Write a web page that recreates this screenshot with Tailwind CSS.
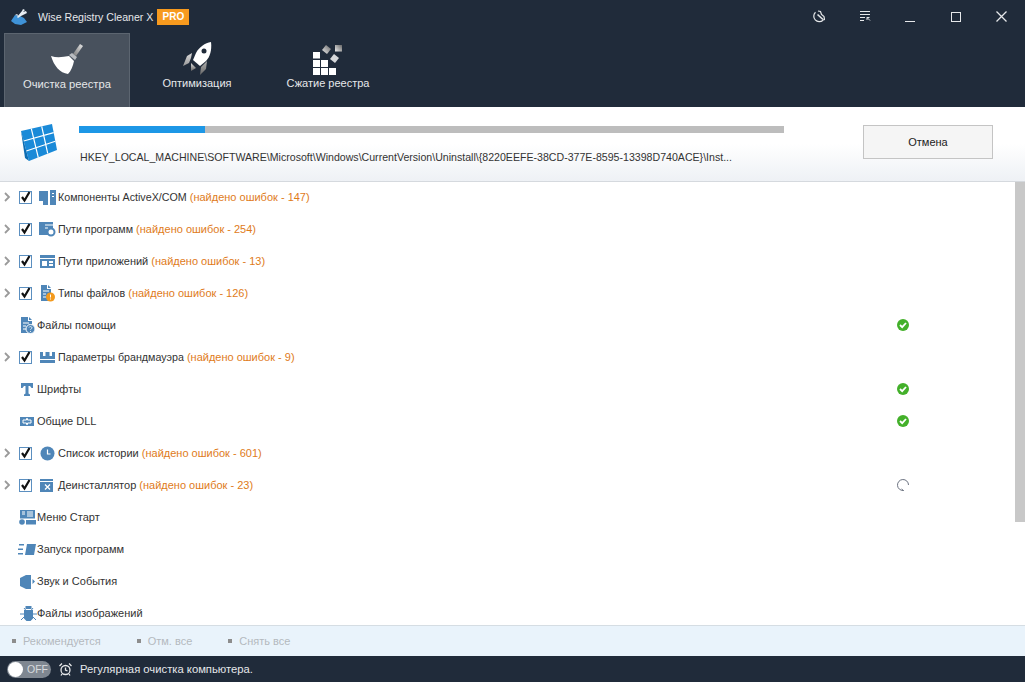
<!DOCTYPE html>
<html lang="ru">
<head>
<meta charset="UTF-8">
<title>Wise Registry Cleaner X</title>
<script src="https://cdn.jsdelivr.net/npm/@tailwindcss/browser@4"></script>
</head>
<body class="w-[1025px] h-[682px] overflow-hidden bg-white font-['Liberation_Sans',sans-serif] text-[11px] leading-[14px] text-[#333]">

<!-- top bar -->
<div class="h-[107px] bg-[#202b3a] text-[#e6e8ea]">
  <div class="h-[33px] flex items-center">
    <svg class="ml-[11px] w-[17px] h-[16px]" viewBox="0 0 17 16"><path d="M0 12l4-6 5 1 4 2 3 4-6 3-6-1z" fill="#3f93d8"/><path d="M4 6l2-1 2 2zM6 8l5-6 1-2 2 1-2 2 3-1 1 2-4 2-2 1-3 2z" fill="#e8eef4"/></svg>
    <span class="ml-[10px] text-[10.600px]">Wise Registry Cleaner X</span>
    <span class="ml-[4px] w-[32px] h-[16px] bg-[#f79a1e] text-white text-[10px] font-bold flex items-center justify-center">PRO</span>
    <div class="ml-auto flex items-center">
      <svg class="w-[13px] h-[13px] mr-[35px]" viewBox="0 0 13 13" fill="none" stroke="#e6e8ea" stroke-width="1.200"><path d="M3.500 2.200a5.200 5.200 0 1 0 7.500 8"/><path d="M6 1l2.500.5 1 3 2.500 2 .5 3-1.500.5"/><path d="M5.500 4.500l5.500 5" stroke-width="1.600"/></svg>
      <svg class="w-[11px] h-[11px] mr-[34px]" viewBox="0 0 11 11" fill="none" stroke="#e6e8ea"><path d="M0 .5h10M0 3.500h10M0 6.500h5M0 9.500h4M7 6.500l3 3M7 6.500h2.500M7 6.500v2.500"/></svg>
      <div class="w-[10px] h-px bg-[#e6e8ea] mt-[9px] mr-[36px]"></div>
      <div class="w-[10px] h-[10px] border border-[#e6e8ea] mr-[35px]"></div>
      <svg class="w-[11px] h-[11px] mr-[18px]" viewBox="0 0 11 11" stroke="#e6e8ea" stroke-width="1.300"><path d="M.5.5l10 10M10.500.5l-10 10"/></svg>
    </div>
  </div>
  <div class="flex pl-[4px] h-[74px]">
    <div class="w-[126px] bg-[#48515d] border border-[#5c6570] border-b-0 flex flex-col items-center">
      <svg class="mt-[9px] w-[33px] h-[31px]" viewBox="0 0 33 31"><defs><linearGradient id="hd" x1="1" y1="0" x2="0" y2="1"><stop offset="0" stop-color="#e8e8e8"/><stop offset="1" stop-color="#777"/></linearGradient></defs><path d="M22 11l7-10 3 2-7 10z" fill="url(#hd)"/><path d="M18 12l3-2 5 4-2 3z" fill="#b9bcc0"/><path d="M0 13c6 2 12 1 18 0l5 5c-1 5-3 10-6 13C9 30 3 23 0 13z" fill="#fff"/></svg>
      <span class="mt-[3px] text-[11.200px]">Очистка реестра</span>
    </div>
    <div class="w-[134px] flex flex-col items-center">
      <svg class="mt-[9px] w-[29px] h-[33px]" viewBox="0 0 29 33"><defs><linearGradient id="fn" x1="0" y1="0" x2="0" y2="1"><stop offset="0" stop-color="#ddd"/><stop offset="1" stop-color="#666"/></linearGradient></defs><path d="M28 0c1 8-1 15-5 19l-6 5-7-6 3-7c3-6 9-10 15-11z" fill="#fff"/><circle cx="21" cy="9" r="2.500" fill="#202b3a"/><path d="M9 11l-5 3-4 10 6-3 2-5zM18 25l-1 8 6-6 1-8z" fill="url(#fn)"/><path d="M8 21l5 5-5 3z" fill="url(#fn)"/></svg>
      <span class="mt-[1px]">Оптимизация</span>
    </div>
    <div class="w-[128px] flex flex-col items-center">
      <svg class="mt-[12px] w-[30px] h-[30px]" viewBox="0 0 30 30" fill="#fff"><defs><linearGradient id="bl" x1="1" y1="0" x2="0" y2="1"><stop offset="0" stop-color="#666"/><stop offset="1" stop-color="#eee"/></linearGradient></defs><path d="M0 7h7v6.500H0zM0 15h7v7H0zM8 15h7v7H8zM0 23h7v7H0zM8 23h7v7H8zM16 23h7v7h-7z"/><path d="M13 0l5 4-4 5-5-4z" fill="url(#bl)"/><path d="M22 0h7v6.500h-7z" fill="url(#bl)"/><path d="M21 9l5 4-4 5-5-4z" fill="#d6d8da"/></svg>
      <span class="mt-[1px]">Сжатие реестра</span>
    </div>
  </div>
</div>

<!-- progress header -->
<div class="h-[75px] flex border-b border-[#d5d9de] bg-gradient-to-b from-white via-white to-[#eef1f5]">
  <svg class="ml-[20px] mt-[16px] w-[37px] h-[38px]" viewBox="0 0 37 38">
    <path d="M1 8L32 1l5 26-28 11z" fill="#1a8ad8"/>
    <path d="M11.300 5.700l7 29M21.700 3.300l6 27M3.700 18l30-8.300M6.300 28l29-9.700" stroke="#fff" stroke-width="1.200" fill="none"/>
    <path d="M1 8l8 30-4-3z" fill="#0d6db3"/>
  </svg>
  <div class="ml-[22px] w-[705px]">
    <div class="mt-[19px] h-[7px] bg-[#bdbdbd]"><div class="w-[126px] h-full bg-[#1d97e6]"></div></div>
    <div class="mt-[17px] ml-px text-[10.600px] text-[#333] whitespace-nowrap">HKEY_LOCAL_MACHINE\SOFTWARE\Microsoft\Windows\CurrentVersion\Uninstall\{8220EEFE-38CD-377E-8595-13398D740ACE}\Inst...</div>
  </div>
  <button class="ml-[79px] mt-[18px] w-[130px] h-[34px] bg-[#f5f5f5] border border-[#c4c4c4] text-[#222]">Отмена</button>
</div>

<!-- scan list -->
<div class="h-[443px] relative overflow-hidden">
  <div class="absolute right-0 top-0 w-[10px] h-[340px] bg-[#c8c8c8]"></div>

  <div class="h-[32px] -mt-px flex items-center">
    <svg class="ml-[4px] w-[7px] h-[10px]" viewBox="0 0 7 10" fill="none" stroke="#9a9a9a" stroke-width="1.800"><path d="M1 1l4 4-4 4"/></svg>
    <svg class="ml-[8px] w-[13px] h-[13px]" viewBox="0 0 13 13"><rect x=".5" y=".5" width="12" height="12" fill="#fff" stroke="#5b8fc0"/><path d="M3 6l2.500 3.500L10.500 1" fill="none" stroke="#111" stroke-width="2.200"/></svg>
    <svg class="ml-[7px] w-[17px] h-[15px]" viewBox="0 0 17 15" fill="#4f86b8"><path d="M0 1h9v10H0zM4 11h5v4H4zM11 0h6v15h-6z"/><path d="M13 3h2v1h-2zM13 6h2v1h-2z" fill="#fff"/></svg>
    <span class="ml-[2px]"><span class="text-[10.700px]">Компоненты ActiveX/COM</span> <span class="text-[#e07b1a]">(найдено ошибок - 147)</span></span>
  </div>

  <div class="h-[32px] flex items-center">
    <svg class="ml-[4px] w-[7px] h-[10px]" viewBox="0 0 7 10" fill="none" stroke="#9a9a9a" stroke-width="1.800"><path d="M1 1l4 4-4 4"/></svg>
    <svg class="ml-[8px] w-[13px] h-[13px]" viewBox="0 0 13 13"><rect x=".5" y=".5" width="12" height="12" fill="#fff" stroke="#5b8fc0"/><path d="M3 6l2.500 3.500L10.500 1" fill="none" stroke="#111" stroke-width="2.200"/></svg>
    <svg class="ml-[7px] w-[17px] h-[15px]" viewBox="0 0 17 15"><path d="M0 0h14v13H0z" fill="#4f86b8"/><path d="M6 3h8M6 6h3" stroke="#fff"/><circle cx="12" cy="10" r="3.500" fill="#fff" stroke="#4f86b8" stroke-width="2"/></svg>
    <span class="ml-[2px]"><span class="text-[10.700px]">Пути программ</span> <span class="text-[#e07b1a]">(найдено ошибок - 254)</span></span>
  </div>

  <div class="h-[32px] flex items-center">
    <svg class="ml-[4px] w-[7px] h-[10px]" viewBox="0 0 7 10" fill="none" stroke="#9a9a9a" stroke-width="1.800"><path d="M1 1l4 4-4 4"/></svg>
    <svg class="ml-[8px] w-[13px] h-[13px]" viewBox="0 0 13 13"><rect x=".5" y=".5" width="12" height="12" fill="#fff" stroke="#5b8fc0"/><path d="M3 6l2.500 3.500L10.500 1" fill="none" stroke="#111" stroke-width="2.200"/></svg>
    <svg class="ml-[7px] w-[17px] h-[15px]" viewBox="0 0 17 15"><path d="M1 1h15v13H1z" fill="#4f86b8"/><path d="M1 4.500h15" stroke="#fff"/><path d="M3 7h5v5H3zM10 7h4v2h-4zM10 10h4v2h-4z" fill="#fff"/></svg>
    <span class="ml-[2px]">Пути приложений <span class="text-[#e07b1a]">(найдено ошибок - 13)</span></span>
  </div>

  <div class="h-[32px] flex items-center">
    <svg class="ml-[4px] w-[7px] h-[10px]" viewBox="0 0 7 10" fill="none" stroke="#9a9a9a" stroke-width="1.800"><path d="M1 1l4 4-4 4"/></svg>
    <svg class="ml-[8px] w-[13px] h-[13px]" viewBox="0 0 13 13"><rect x=".5" y=".5" width="12" height="12" fill="#fff" stroke="#5b8fc0"/><path d="M3 6l2.500 3.500L10.500 1" fill="none" stroke="#111" stroke-width="2.200"/></svg>
    <svg class="ml-[7px] w-[17px] h-[17px]" viewBox="0 0 17 17"><path d="M2 0h6v4h4v12H2z" fill="#4f86b8"/><path d="M9 0l3 3H9z" fill="#4f86b8"/><path d="M4 6h6M4 9h3M4 12h3" stroke="#fff"/><circle cx="11.500" cy="12" r="4.500" fill="#f39a1e"/><path d="M11.500 9.500v3M11.500 13.500v1" stroke="#fff"/></svg>
    <span class="ml-[2px]"><span class="text-[10.700px]">Типы файлов</span> <span class="text-[#e07b1a]">(найдено ошибок - 126)</span></span>
  </div>

  <div class="h-[32px] flex items-center relative">
    <svg class="ml-[20px] w-[17px] h-[17px]" viewBox="0 0 17 17"><path d="M1 0h7v4h4v12H1z" fill="#4f86b8"/><path d="M9 0l3 3H9z" fill="#4f86b8"/><path d="M3 6h6M3 9h3M3 12h3" stroke="#fff"/><circle cx="10.500" cy="12" r="4.500" fill="#4f86b8" stroke="#fff"/><path d="M9 10.500c.5-1.500 3-1 3 .3 0 1-1.500 1-1.500 2M10.500 14v1" fill="none" stroke="#fff" stroke-width=".8"/></svg>
    <span>Файлы помощи</span>
    <svg class="absolute left-[897px] top-[10px] w-[12px] h-[12px]" viewBox="0 0 12 12"><circle cx="6" cy="6" r="6" fill="#43b02a"/><path d="M3 6l2.200 2.200L9 4" fill="none" stroke="#fff" stroke-width="1.800"/></svg>
  </div>

  <div class="h-[32px] flex items-center">
    <svg class="ml-[4px] w-[7px] h-[10px]" viewBox="0 0 7 10" fill="none" stroke="#9a9a9a" stroke-width="1.800"><path d="M1 1l4 4-4 4"/></svg>
    <svg class="ml-[8px] w-[13px] h-[13px]" viewBox="0 0 13 13"><rect x=".5" y=".5" width="12" height="12" fill="#fff" stroke="#5b8fc0"/><path d="M3 6l2.500 3.500L10.500 1" fill="none" stroke="#111" stroke-width="2.200"/></svg>
    <svg class="ml-[7px] w-[17px] h-[15px]" viewBox="0 0 17 15" fill="#4f86b8"><path d="M1 2h3v4h2.500V2h4v4H13V2h3v7H1zM1 10h15v3H1z"/></svg>
    <span class="ml-[2px]"><span class="text-[10.700px]">Параметры брандмауэра</span> <span class="text-[#e07b1a]">(найдено ошибок - 9)</span></span>
  </div>

  <div class="h-[32px] flex items-center relative">
    <svg class="ml-[20px] w-[17px] h-[15px]" viewBox="0 0 17 15" fill="#4f86b8"><path d="M1 1h12v5h-1.500L10 4H8.500v7.500l1.500 1V14H4v-1.500l1.500-1V4H4L2.500 6H1z"/></svg>
    <span>Шрифты</span>
    <svg class="absolute left-[897px] top-[10px] w-[12px] h-[12px]" viewBox="0 0 12 12"><circle cx="6" cy="6" r="6" fill="#43b02a"/><path d="M3 6l2.200 2.200L9 4" fill="none" stroke="#fff" stroke-width="1.800"/></svg>
  </div>

  <div class="h-[32px] flex items-center relative">
    <svg class="ml-[20px] w-[14px] h-[15px] mr-[3px]" viewBox="0 0 14 15"><path d="M0 3h14v9H0z" fill="#4f86b8"/><path d="M3 6h3.500V4.500h1V6H11v3H7.500v1.500h-1V9H3z" fill="none" stroke="#fff"/></svg>
    <span>Общие DLL</span>
    <svg class="absolute left-[897px] top-[10px] w-[12px] h-[12px]" viewBox="0 0 12 12"><circle cx="6" cy="6" r="6" fill="#43b02a"/><path d="M3 6l2.200 2.200L9 4" fill="none" stroke="#fff" stroke-width="1.800"/></svg>
  </div>

  <div class="h-[32px] flex items-center">
    <svg class="ml-[4px] w-[7px] h-[10px]" viewBox="0 0 7 10" fill="none" stroke="#9a9a9a" stroke-width="1.800"><path d="M1 1l4 4-4 4"/></svg>
    <svg class="ml-[8px] w-[13px] h-[13px]" viewBox="0 0 13 13"><rect x=".5" y=".5" width="12" height="12" fill="#fff" stroke="#5b8fc0"/><path d="M3 6l2.500 3.500L10.500 1" fill="none" stroke="#111" stroke-width="2.200"/></svg>
    <svg class="ml-[7px] w-[17px] h-[15px]" viewBox="0 0 17 15"><circle cx="8.500" cy="7.500" r="7" fill="#4f86b8"/><path d="M8.500 3.500v4.500h3" fill="none" stroke="#fff" stroke-width="1.200"/></svg>
    <span class="ml-[2px]">Список истории <span class="text-[#e07b1a]">(найдено ошибок - 601)</span></span>
  </div>

  <div class="h-[32px] flex items-center relative">
    <svg class="ml-[4px] w-[7px] h-[10px]" viewBox="0 0 7 10" fill="none" stroke="#9a9a9a" stroke-width="1.800"><path d="M1 1l4 4-4 4"/></svg>
    <svg class="ml-[8px] w-[13px] h-[13px]" viewBox="0 0 13 13"><rect x=".5" y=".5" width="12" height="12" fill="#fff" stroke="#5b8fc0"/><path d="M3 6l2.500 3.500L10.500 1" fill="none" stroke="#111" stroke-width="2.200"/></svg>
    <svg class="ml-[7px] w-[17px] h-[15px]" viewBox="0 0 17 15"><path d="M1 1h13v13H1z" fill="#4f86b8"/><path d="M1 3.500h13" stroke="#fff"/><path d="M6 6.500l5 5M11 6.500l-5 5" stroke="#fff" stroke-width="1.300"/></svg>
    <span class="ml-[2px]">Деинсталлятор <span class="text-[#e07b1a]">(найдено ошибок - 23)</span></span>
    <svg class="absolute left-[897px] top-[10px] w-[12px] h-[12px]" viewBox="0 0 12 12" fill="none" stroke="#6b7280" stroke-width="1"><path d="M6.500 11.500A5.500 5.500 0 1 1 11.500 6"/><path d="M4.500 10l2 1.500-1 1"/></svg>
  </div>

  <div class="h-[32px] flex items-center">
    <svg class="ml-[19px] w-[18px] h-[15px]" viewBox="0 0 18 15"><path d="M1 0h15v8.500H1z" fill="#4f86b8"/><path d="M8 2h6M8 4h6M8 6h6M3 2h3M3 4h3" stroke="#fff"/><circle cx="3" cy="12" r="2.800" fill="#4f86b8"/><path d="M7 10h10v4.500H7z" fill="#4f86b8"/></svg>
    <span>Меню Старт</span>
  </div>

  <div class="h-[32px] flex items-center">
    <svg class="ml-[18px] w-[19px] h-[13px]" viewBox="0 0 19 13" fill="#4f86b8"><path d="M1 1h5v1.500H1zM0 5.500h5V7H0zM0 10h5v1.500H0zM9 1h9l-2 11H7z"/></svg>
    <span>Запуск программ</span>
  </div>

  <div class="h-[32px] flex items-center">
    <svg class="ml-[20px] w-[17px] h-[15px]" viewBox="0 0 17 15" fill="#4f86b8"><path d="M0 4l6-3h5v14H6L0 12zM12.500 5l2.500 2.500-2.500 2.500z"/></svg>
    <span>Звук и События</span>
  </div>

  <div class="h-[32px] flex items-center">
    <svg class="ml-[20px] w-[17px] h-[15px]" viewBox="0 0 17 15" fill="#4f86b8"><path d="M5.500 0h6v3h-6zM4 4h9v8.500L10.500 15h-4L4 12.500z"/><path d="M4 2l2 2.500M13 2l-2 2.500M0 8h4M17 8h-4M1 14l3-3M16 14l-3-3" stroke="#4f86b8" fill="none"/></svg>
    <span>Файлы изображений</span>
  </div>
</div>

<!-- select links -->
<div class="h-[31px] bg-[#e9f3fb] border-t border-[#d5dde3] flex items-center text-[#b4b9be]">
  <span class="ml-[12px] w-[4px] h-[4px] bg-[#8d8d8d]"></span>
  <span class="ml-[7px]">Рекомендуется</span>
  <span class="ml-[36px] w-[4px] h-[4px] bg-[#8d8d8d]"></span>
  <span class="ml-[7px]">Отм. все</span>
  <span class="ml-[36px] w-[4px] h-[4px] bg-[#8d8d8d]"></span>
  <span class="ml-[7px]">Снять все</span>
</div>

<!-- schedule bar -->
<div class="h-[26px] bg-[#202b3a] flex items-center text-[#e6e8ea]">
  <div class="ml-[7px] w-[44px] h-[17px] rounded-full bg-[#7f8791] flex items-center">
    <span class="ml-px w-[15px] h-[15px] rounded-full bg-white"></span>
    <span class="ml-[4px] text-[10.500px] text-[#d8dade]">OFF</span>
  </div>
  <svg class="ml-[8px] w-[13px] h-[13px]" viewBox="0 0 13 13" fill="none" stroke="#e6e8ea" stroke-width="1.300"><circle cx="6.500" cy="7" r="4.500"/><path d="M6.500 4.500V7l2 1M.5 3L3 .5M12.500 3L10 .5M3 11l-1 1.500M10 11l1 1.500"/></svg>
  <span class="ml-[8px] text-[11.250px]">Регулярная очистка компьютера.</span>
</div>

</body>
</html>
